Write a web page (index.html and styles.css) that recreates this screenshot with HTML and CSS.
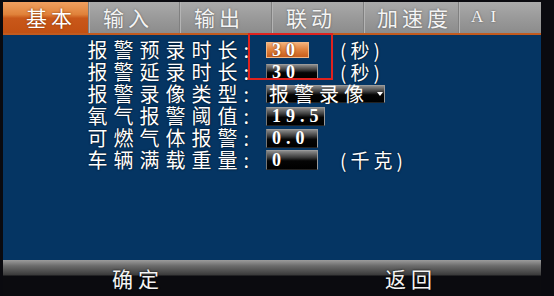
FILE: index.html
```html
<!DOCTYPE html>
<html lang="zh-CN">
<head>
    <meta charset="UTF-8">
    <meta name="viewport" content="width=device-width, initial-scale=1.0">
    <title>报警设置</title>
    <link rel="stylesheet" href="styles.css">
</head>
<body>
    <div class="screen">
        <div class="tabs">
            <div class="tab active first">基本</div>
            <div class="tab w91">输入</div>
            <div class="tab w92">输出</div>
            <div class="tab w92">联动</div>
            <div class="tab w95">加速度</div>
            <div class="tab last latin">A I</div>
        </div>

        <div class="panel">
            <div class="form">
                <div class="label">报警预录时长:</div>
                <div class="cell"><span class="field focus short">30</span></div>
                <div class="unit">(秒)</div>

                <div class="label">报警延录时长:</div>
                <div class="cell"><span class="field mid">30</span></div>
                <div class="unit">(秒)</div>

                <div class="label">报警录像类型:</div>
                <div class="cell span"><span class="field select">报警录像<i class="arrow"></i></span></div>

                <div class="label">氧气报警阈值:</div>
                <div class="cell"><span class="field">19.5</span></div>
                <div class="unit"></div>

                <div class="label">可燃气体报警:</div>
                <div class="cell"><span class="field">0.0</span></div>
                <div class="unit"></div>

                <div class="label">车辆满载重量:</div>
                <div class="cell"><span class="field tall">0</span></div>
                <div class="unit">(千克)</div>
            </div>
            <div class="highlight"></div>
        </div>

        <div class="footer">
            <span class="btn">确定</span>
            <span class="btn">返回</span>
        </div>
    </div>
</body>
</html>
```

FILE: styles.css
```css
body {
    margin: 0;
    background: #0a0a0f;
    font-family: "Noto Sans CJK SC", "Liberation Sans", sans-serif;
    color: #fff;
}
.screen {
    width: 538px;
    height: 294px;
    margin-left: 3px;
    padding-top: 2px;
    display: flex;
    flex-direction: column;
}

/* tab bar */
.tabs {
    display: flex;
    height: 31px;
    background: linear-gradient(#aaaaaa, #9a9a9a 50%, #8c8c8c);
    border-bottom: 2px solid #c25a1e;
    box-shadow: 0 1px 0 #7a3a14;
}
.tab {
    box-sizing: border-box;
    height: 31px;
    line-height: 30px;
    padding-left: 14px;
    font-size: 21px;
    letter-spacing: 4px;
    color: #f4f4f4;
    text-shadow: 0 0 2px #555;
    border-left: 1px solid #808080;
    box-shadow: inset 1px 0 0 #b4b4b4;
}
.tab.first {
    width: 85px;
    padding-left: 23px;
    border-left: none;
}
.tab.w91 { width: 91px; }
.tab.w92 { width: 92px; }
.tab.w95 { width: 95px; padding-left: 13px; }
.tab.last { flex: 1; padding-left: 12px; }
.tab.latin {
    font-family: "Liberation Serif", serif;
    font-size: 17px;
    letter-spacing: 2px;
}
.tab.active {
    background: linear-gradient(#f0a060, #e0823a 40%, #c9581a 52%, #c25012);
    box-shadow: none;
    color: #fff;
    text-shadow: 0 0 2px #7a3000;
}

/* main panel */
.panel {
    position: relative;
    flex: 1;
    background: #053563;
    padding-top: 4px;
}
.form {
    display: grid;
    grid-template-columns: 166px 67px auto;
    grid-auto-rows: 22px;
    padding-left: 82px;
}
.label {
    text-align: right;
    font-size: 20px;
    line-height: 22px;
    letter-spacing: 6px;
    margin-right: -4px;
    text-shadow: 0 0 2px #000;
    white-space: nowrap;
}
.cell {
    display: flex;
    align-items: center;
    padding-left: 15px;
}
.cell.span {
    grid-column: 2 / 4;
}
.unit {
    font-size: 19px;
    line-height: 22px;
    letter-spacing: 4px;
    padding-left: 22px;
    text-shadow: 0 0 2px #000;
    white-space: nowrap;
}
.field {
    box-sizing: border-box;
    display: inline-flex;
    align-items: center;
    width: 67px;
    height: 19px;
    padding-left: 5px;
    font-family: "Liberation Serif", serif;
    font-weight: bold;
    font-size: 18px;
    letter-spacing: 5px;
    border: 1px solid #9a9a9a;
    border-bottom-color: #222;
    border-left-color: #777;
    background: linear-gradient(#8a8a8a, #3c3c3c 35%, #050505 55%, #000);
}
.field.short {
    width: 43px;
    height: 16px;
}
.field.mid {
    height: 16px;
}
.field.tall {
    height: 20px;
}
.field.focus {
    border-color: #f0b888;
    background: linear-gradient(#f4b078, #e08440 45%, #c85e1c);
    color: #fff;
    text-shadow: 0 0 2px #6a2600;
}
.field.select {
    position: relative;
    width: 119px;
    height: 18px;
    padding-left: 2px;
    font-family: "Noto Sans CJK SC", sans-serif;
    font-weight: normal;
    font-size: 20px;
    letter-spacing: 5px;
    line-height: 18px;
    white-space: nowrap;
}
.arrow {
    position: absolute;
    right: 1px;
    top: 6px;
    width: 0;
    height: 0;
    border-left: 3px solid transparent;
    border-right: 3px solid transparent;
    border-top: 4px solid #fff;
}
.highlight {
    position: absolute;
    left: 245px;
    top: -2px;
    width: 81px;
    height: 43px;
    border: 2px solid #e0221e;
}

/* bottom bar */
.footer {
    height: 36px;
    display: flex;
    padding-left: 109px;
    gap: 221px;
    background: linear-gradient(#9c9c9c, #6a6a6a 6px, #3a3a3a 15px, #0b0b0f 16px);
}
.btn {
    font-size: 21px;
    letter-spacing: 5px;
    line-height: 22px;
    padding-top: 7px;
    color: #f4f4f4;
    text-shadow: 0 0 2px #000;
}
```
